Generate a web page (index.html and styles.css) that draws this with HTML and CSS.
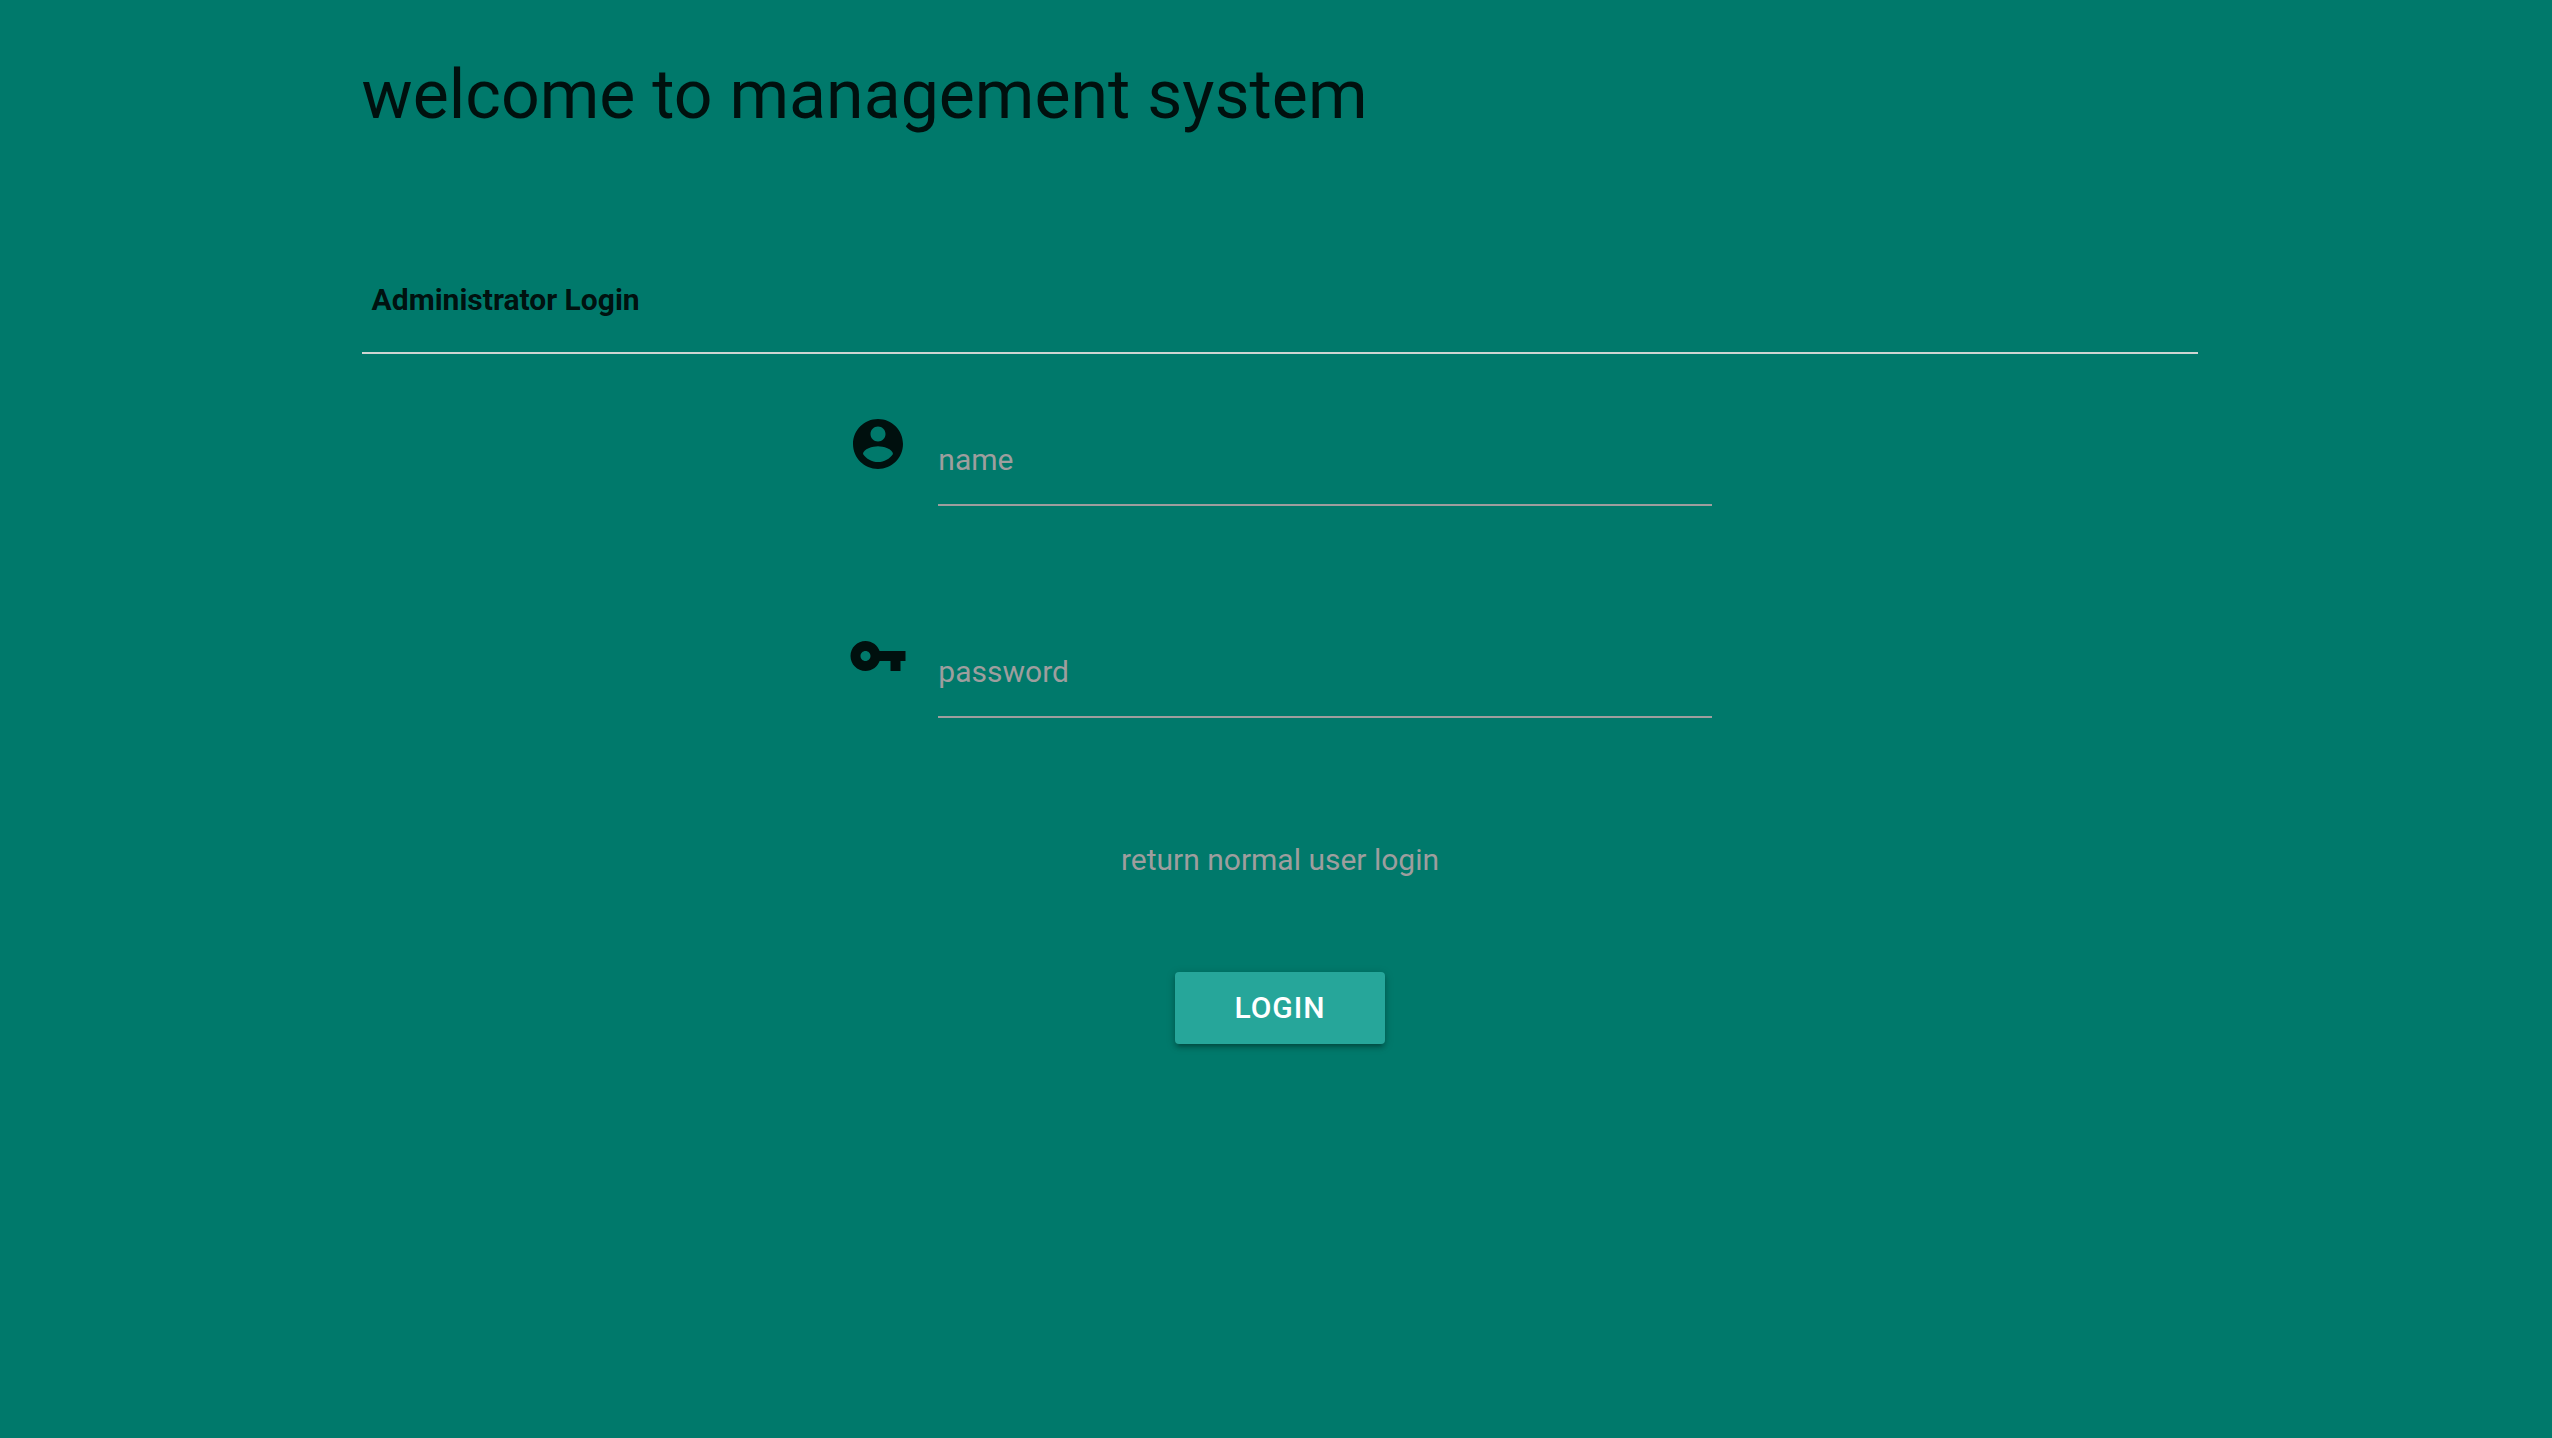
FILE: index.html
```html
<!DOCTYPE html>
<html lang="en">
<head>
  <meta charset="utf-8">
  <title>Management System</title>
  <link rel="stylesheet" href="styles.css">
</head>
<body>
  <main class="page">
    <h1 class="title">welcome to management system</h1>
    <h2 class="section-title">Administrator Login</h2>
    <form class="login-form">
      <div class="field">
        <label class="field-icon" for="name" aria-label="name">
          <svg viewBox="0 0 24 24" aria-hidden="true"><path d="M12 2C6.48 2 2 6.48 2 12s4.48 10 10 10 10-4.48 10-10S17.52 2 12 2zm0 3c1.66 0 3 1.34 3 3s-1.34 3-3 3-3-1.34-3-3 1.34-3 3-3zm0 14.2c-2.5 0-4.71-1.28-6-3.22.03-1.99 4-3.08 6-3.08 1.99 0 5.97 1.09 6 3.08-1.29 1.94-3.5 3.22-6 3.22z"/></svg>
        </label>
        <input class="field-input" id="name" type="text" placeholder="name">
      </div>
      <div class="field">
        <label class="field-icon" for="password" aria-label="password">
          <svg viewBox="0 0 24 24" aria-hidden="true"><path d="M12.65 10C11.83 7.67 9.61 6 7 6c-3.31 0-6 2.69-6 6s2.69 6 6 6c2.61 0 4.83-1.67 5.65-4H17v4h4v-4h2v-4H12.65zM7 14c-1.1 0-2-.9-2-2s.9-2 2-2 2 .9 2 2-.9 2-2 2z"/></svg>
        </label>
        <input class="field-input" id="password" type="password" placeholder="password">
      </div>
      <a class="return-link" href="#">return normal user login</a>
      <button class="login-button" type="submit">LOGIN</button>
    </form>
  </main>
</body>
</html>
```
FILE: styles.css
```css
* {
  box-sizing: border-box;
}

body {
  margin: 0;
  padding-left: 8px;
  min-height: 100vh;
  background: #00796b;
  color: rgba(0, 0, 0, 0.87);
  font-family: Roboto, sans-serif;
  font-size: 30px;
  line-height: 44px;
}

.page {
  width: 72.2%;
  margin: 0 auto;
  padding-top: 57px;
}

.title {
  margin: 0;
  font-size: 68px;
  font-weight: 400;
  line-height: 76px;
}

.section-title {
  margin: 145px 0 0;
  padding: 0 10px 30px;
  border-bottom: 2px solid #ced5d2;
  font-size: 30px;
  font-weight: 700;
}

.login-form {
  display: flex;
  flex-direction: column;
  align-items: center;
  padding-top: 60px;
}

.field {
  display: flex;
  align-items: flex-start;
  gap: 30px;
  width: 47%;
  margin-bottom: 120px;
}

.field-icon {
  flex: none;
  width: 60px;
  height: 60px;
}

.field-icon svg {
  display: block;
  width: 100%;
  height: 100%;
  fill: currentColor;
}

.field-input {
  flex: 1;
  min-width: 0;
  height: 92px;
  padding: 0;
  border: 0;
  border-bottom: 2px solid #9e9e9e;
  border-radius: 0;
  outline: 0;
  background: transparent;
  color: inherit;
  font: inherit;
}

.field-input::placeholder {
  color: #9e9e9e;
  opacity: 1;
}

.return-link {
  color: #9e9e9e;
  text-decoration: none;
}

.login-button {
  height: 72px;
  margin-top: 90px;
  padding: 0 59px;
  border: 0;
  border-radius: 4px;
  background: #26a69a;
  box-shadow:
    0 4px 4px rgba(0, 0, 0, 0.14),
    0 6px 2px -4px rgba(0, 0, 0, 0.12),
    0 2px 10px rgba(0, 0, 0, 0.2);
  color: #fff;
  font: inherit;
  font-weight: 500;
  letter-spacing: 1px;
  cursor: pointer;
}
```
